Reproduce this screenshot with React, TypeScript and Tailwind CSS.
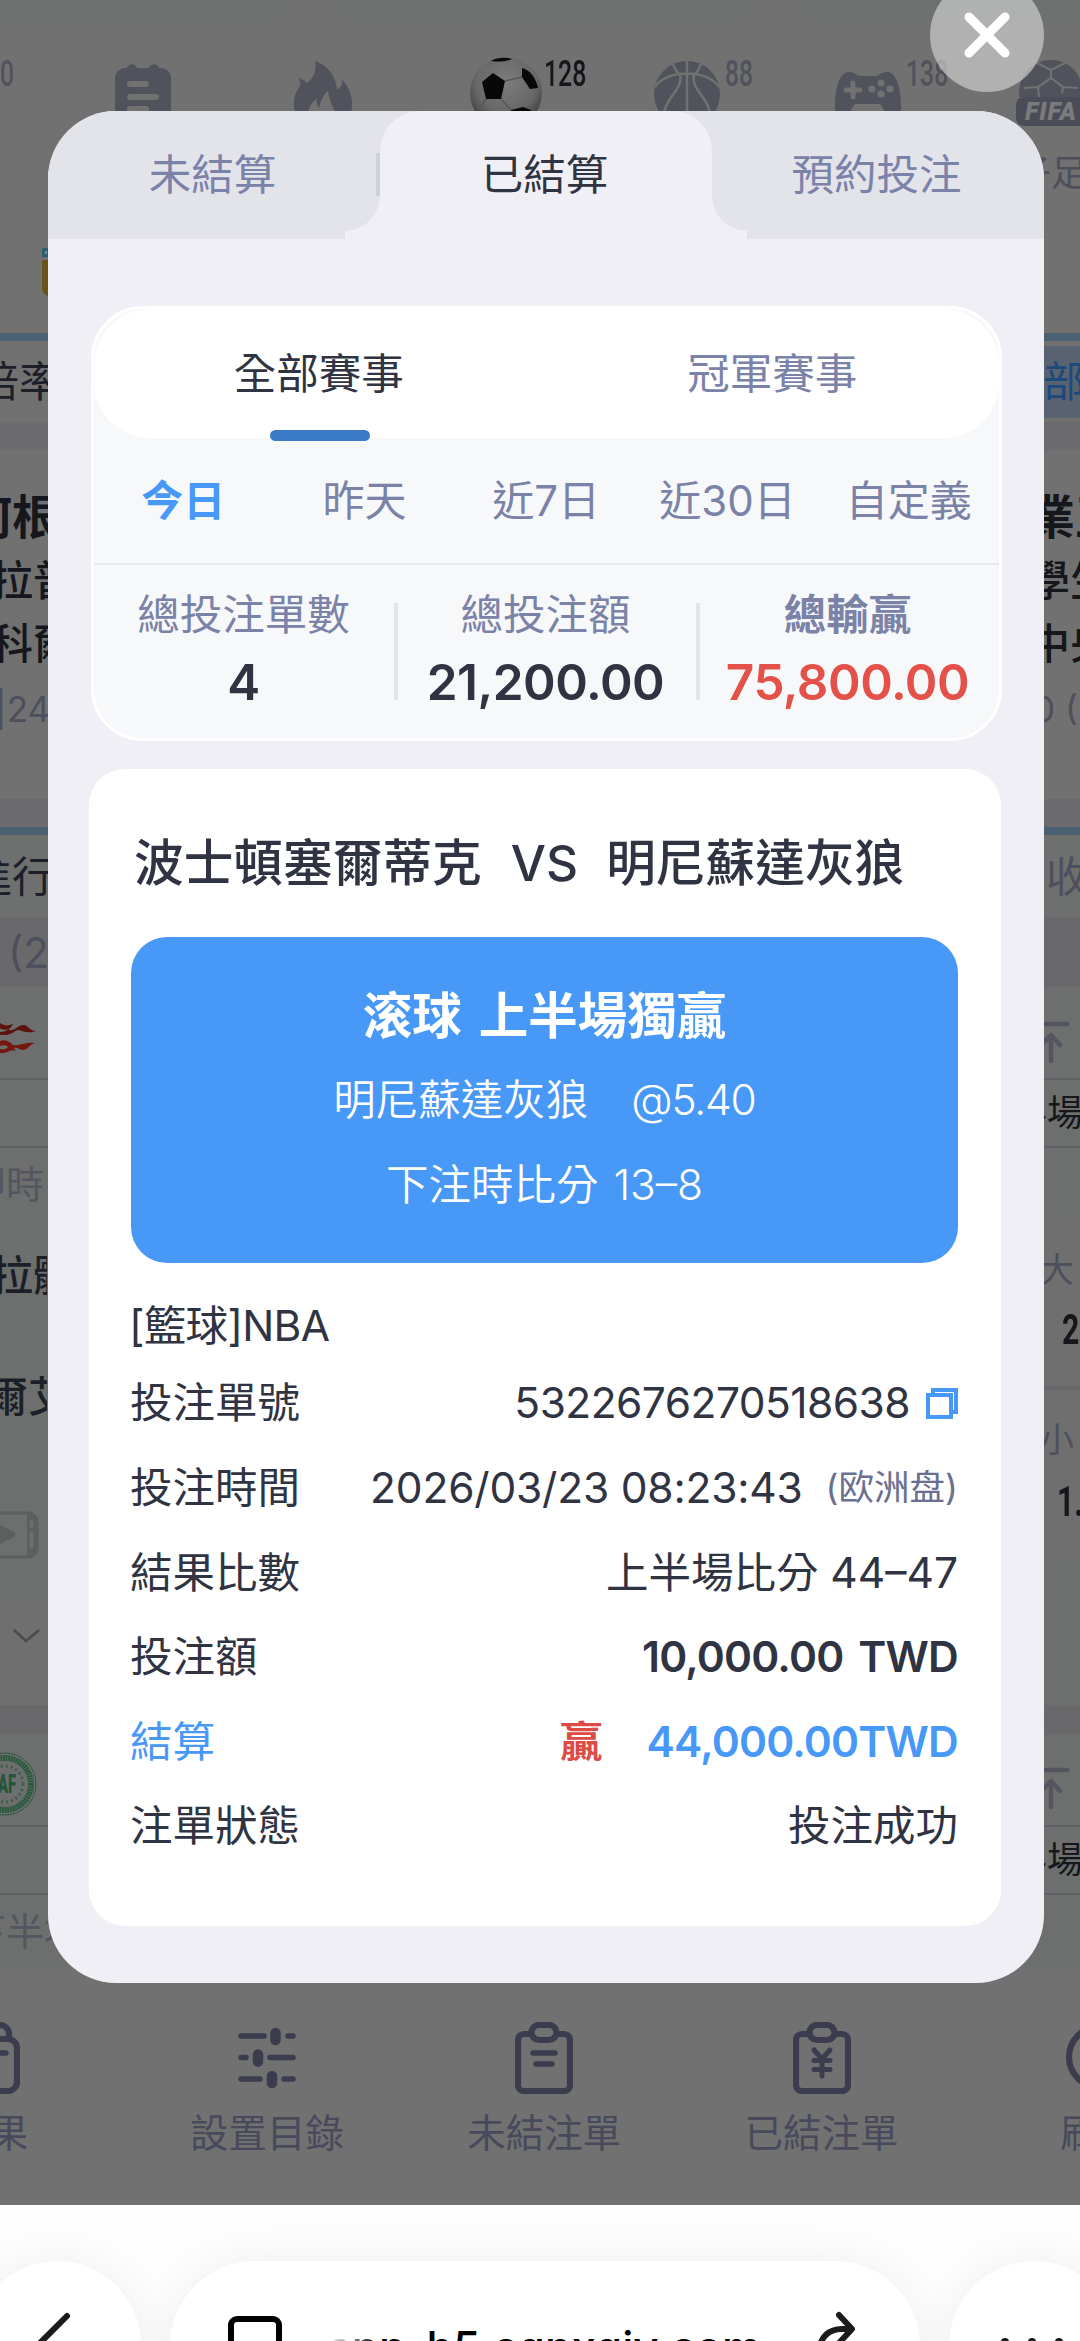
import React from 'react';
import clsx from 'clsx';

const PERIODS = ['今日', '昨天', '近7日', '近30日', '自定義'];

const STATS = [
  { label: '總投注單數', value: '4' },
  { label: '總投注額', value: '21,200.00' },
  { label: '總輸贏', value: '75,800.00', win: true },
];

interface StripProps {
  className: string;
  left?: React.ReactNode;
  right?: React.ReactNode;
}

// one full width line of the page behind the dialog
function Strip({ className, left, right }: StripProps) {
  return (
    <div className={clsx('flex justify-between overflow-hidden', className)}>
      <div className="flex w-[47px] items-center whitespace-nowrap">{left}</div>
      <div className="flex w-[37px] items-center whitespace-nowrap">{right}</div>
    </div>
  );
}

function NoteIcon() {
  return (
    <svg width="56" height="72" viewBox="0 0 56 72" fill="#50525c">
      <path d="M10 5h2c1-5 9-5 10 0h12c1-5 9-5 10 0h2a10 10 0 0 1 10 10v57H0V15A10 10 0 0 1 10 5z" />
      <path d="M15 21h16M15 34h26M15 46h16" stroke="#717171" strokeWidth="6" strokeLinecap="round" />
    </svg>
  );
}

function FlameIcon() {
  return (
    <svg width="60" height="72" viewBox="0 0 60 72" fill="#50525c">
      <path d="M21 0c12 4 21 14 22 29 5-3 6-7 4-12 7 8 11 16 11 26 0 16-10 28-29 28S0 58 0 42c0-8 3-13 6-17 0-3 0-5-1-8 3 1 6 3 8 5 7-5 10-13 8-22z" />
      <path d="M34 30c-5 4-7 9-9 17-2-3-3-6-2-10-6 5-9 11-10 19v15h35c0-16-10-19-14-41z" fill="#717171" />
      <path d="M23 36c-1 4 0 7 2 11 1-4 1-8 3-12z" fill="#50525c" />
    </svg>
  );
}

function SoccerIcon() {
  return (
    <svg width="72" height="72" viewBox="0 0 72 72">
      <defs>
        <radialGradient id="ball" cx="50%" cy="35%" r="60%">
          <stop offset="0" stopColor="#7c7c7c" />
          <stop offset="0.7" stopColor="#686868" />
          <stop offset="1" stopColor="#444" />
        </radialGradient>
      </defs>
      <circle cx="36" cy="36" r="36" fill="url(#ball)" />
      <path d="M23 16l12 8-4 18H16l-4-17zM52 11c8 2 14 10 16 20l-8 1-8-12zM21 4c6-4 16-4 21-2-7 3-14 3-21 2zM4 53l8 5-2 4zM41 53l12-3 8 3-2 14H42z" fill="#080808" />
      <path d="M35 24l17-4M31 42l10 11M16 42l-8 11" stroke="#585858" strokeWidth="1.5" fill="none" />
    </svg>
  );
}

function BasketballIcon() {
  return (
    <svg width="66" height="66" viewBox="0 0 66 66">
      <circle cx="33" cy="33" r="33" fill="#50525c" />
      <g stroke="#717171" strokeWidth="2.6" fill="none">
        <path d="M33 0v66M1 26C12 8 54 8 65 26M19 3c5 14 9 7 7 18S8 40 9 62M47 3c-5 14-9 7-7 18s18 19 17 41" />
      </g>
    </svg>
  );
}

function GamepadIcon() {
  return (
    <svg width="66" height="56" viewBox="0 0 66 56">
      <path d="M14 0c6 0 8 4 12 4h14c4 0 6-4 12-4 10 0 14 18 14 34 0 12-2 20-7 20-6 0-8-16-14-22H20c-6 6-8 22-13 22-5 0-7-8-7-20C0 18 4 0 14 0z" fill="#50525c" />
      <path d="M18 11v14M11 18h14" stroke="#717171" strokeWidth="5" strokeLinecap="round" />
      <g fill="#717171">
        <circle cx="46" cy="11" r="3.6" />
        <circle cx="46" cy="22" r="3.6" />
        <circle cx="55" cy="17" r="3.6" />
        <circle cx="37" cy="17" r="3.6" />
      </g>
    </svg>
  );
}

function FifaIcon() {
  return (
    <div className="flex w-[70px] flex-col items-center">
      <svg width="64" height="37" viewBox="0 0 64 37">
        <path d="M0 37C-1 14 14 0 32 0s33 14 32 37z" fill="#50525c" />
        <path d="M18 3l14 7 14-7M32 10v8l12 9-1 6M32 18l-13 9 1 10M19 27L5 28M44 27l15 1" stroke="#717171" strokeWidth="2.2" fill="none" />
      </svg>
      <div className="flex h-[29px] w-[70px] items-center justify-center rounded-lg bg-[#4a4c57] font-['Roboto'] text-[25px] font-black italic leading-none tracking-[1px] text-[#7b7b7b]">
        FIFA
      </div>
    </div>
  );
}

function CountBadge({ count, dark }: { count: string; dark?: boolean }) {
  return (
    <span
      className={clsx(
        "absolute top-[41px] left-[129px] origin-left scale-x-[0.69] font-['Roboto'] text-[36px] font-medium leading-[26px]",
        dark ? 'text-[#14161c]' : 'text-[#50525c]'
      )}
    >
      {count}
    </span>
  );
}

function SportItem({ children, count, dark }: { children?: React.ReactNode; count?: string; dark?: boolean }) {
  return (
    <div className="relative flex w-[181.3px] shrink-0 justify-center">
      {children}
      {count && <CountBadge count={count} dark={dark} />}
    </div>
  );
}

function ToTopIcon() {
  return (
    <svg width="27" height="44" viewBox="0 0 27 44" className="shrink-0" stroke="#545561" strokeWidth="4.5" strokeLinecap="round" fill="none">
      <path d="M-20 3h44M8 14v26M-2 24L8 14l9 10" strokeLinejoin="round" />
    </svg>
  );
}

function FireLogo() {
  return (
    <svg width="36" height="34" viewBox="0 0 36 34" className="shrink-0" fill="#5c130e">
      <path d="M0 2c4 3 8 3 13 1-1 3-5 5-4 6 7 1 8-5 15-5 4 0 5 6 12 6-8 3-13 0-17-1-5 0-6 6-19 5v-3c4 0 7-1 8-3-3 1-6 1-8-1z" />
      <path d="M0 20c6-2 10 1 13 4 7 1 12-3 22-2-5 1-6 6-12 7-4 0-5-3-9-2 1 1 1 2 2 3-6-3-8 3-16 2v-4c4 1 6 0 8-2-2-2-5-2-8-1z" fill="#74170f" />
    </svg>
  );
}

function VideoIcon() {
  return (
    <svg width="40" height="48" viewBox="0 0 40 48" className="shrink-0">
      <path d="M-10 2h38a9 9 0 0 1 9 9v26a9 9 0 0 1-9 9h-38" fill="none" stroke="#5d5f5f" strokeWidth="3" />
      <path d="M27 2h3a8 8 0 0 1 8 8v28a8 8 0 0 1-8 8h-3z" fill="#5d5f5f" />
      <rect x="29.500" y="9" width="4" height="8" rx="2" fill="#6c6f6e" />
      <rect x="29.500" y="20" width="4" height="18" rx="2" fill="#6c6f6e" />
      <path d="M-4 12l18 9a3 3 0 0 1 0 5l-18 9z" fill="#5d5f5f" />
    </svg>
  );
}

function ClubBadge() {
  return (
    <svg width="47" height="66" viewBox="0 0 47 66" className="shrink-0">
      <circle cx="5" cy="33" r="31" fill="none" stroke="#2c5a3f" strokeWidth="1" />
      <circle cx="5" cy="33" r="26" fill="none" stroke="#2a593d" strokeWidth="6" strokeDasharray="2 .6" />
      <circle cx="5" cy="33" r="18" fill="none" stroke="#3a5f4a" strokeWidth="3" strokeDasharray="2 3" />
      <text x="-2" y="42" fontFamily="Roboto" fontWeight="900" fontSize="25" textLength="18" lengthAdjust="spacingAndGlyphs" fill="#24543a">
        AF
      </text>
    </svg>
  );
}

function ClipboardIcon({ children }: { children?: React.ReactNode }) {
  return (
    <svg width="58" height="72" viewBox="0 0 58 72" fill="none" stroke="#3b3d4f" strokeWidth="6.200" strokeLinecap="round" strokeLinejoin="round">
      <path d="M14 12H9a6 6 0 0 0-6 6v45a6 6 0 0 0 6 6h40a6 6 0 0 0 6-6V18a6 6 0 0 0-6-6h-5" />
      <rect x="16.500" y="3" width="25" height="15" rx="7.500" />
      {children}
    </svg>
  );
}

function ResultIcon() {
  return (
    <svg width="60" height="72" viewBox="0 0 60 72" fill="none" stroke="#3b3d4f" strokeWidth="6.200" strokeLinecap="round" strokeLinejoin="round">
      <path d="M12 17v-4A10 10 0 0 1 22 3h18a9 9 0 0 1 9 9v5" />
      <rect x="3" y="17" width="54" height="52" rx="9" />
      <path d="M18 31h28M18 44h14" strokeWidth="5.500" />
    </svg>
  );
}

function SlidersIcon() {
  return (
    <svg width="58" height="72" viewBox="0 0 58 72" stroke="#3b3d4f" strokeLinecap="round">
      <path d="M3 14h23M50 14h5M3 35.500h5M32 35.500h23M3 57h19M46 57h9" strokeWidth="5.500" />
      <path d="M37.500 11v7M20 32.500v7M34 54v7" strokeWidth="10.500" />
    </svg>
  );
}

function NavItem({ label, children }: { label: string; children: React.ReactNode }) {
  return (
    <div className="flex w-[277.300px] shrink-0 flex-col items-center">
      {children}
      <span className="mt-[12px] text-[38.500px] leading-[54px] text-[#484a5b]">{label}</span>
    </div>
  );
}

function Backdrop() {
  return (
    <div className="flex h-[2205px] flex-col overflow-hidden bg-[#717171] text-[42px] text-[#4d4f5c]">
      <div className="flex h-[20px] gap-[44px]">
        <div className="-ml-10 w-[334px] shrink-0 rounded-br-[40px] bg-[#6d7170]" />
        <div className="w-[415px] shrink-0 rounded-b-[40px] bg-[#6d7170]" />
        <div className="w-[400px] shrink-0 rounded-bl-[40px] bg-[#6d7170]" />
      </div>
      <div className="-ml-[129px] flex h-[115px]">
        <SportItem count="0" />
        <SportItem>
          <div className="mt-[43px]"><NoteIcon /></div>
        </SportItem>
        <SportItem>
          <div className="mt-[41px]"><FlameIcon /></div>
        </SportItem>
        <SportItem count="128" dark>
          <div className="mt-[37px]"><SoccerIcon /></div>
        </SportItem>
        <SportItem count="88">
          <div className="mt-[41px]"><BasketballIcon /></div>
        </SportItem>
        <SportItem count="138">
          <div className="mt-[52px]"><GamepadIcon /></div>
        </SportItem>
        <SportItem>
          <div className="mt-[40px] ml-[3px]"><FifaIcon /></div>
        </SportItem>
      </div>
      <Strip className="h-[75px] text-[36px]" right={<span className="-ml-[28px]">子足球</span>} />
      <Strip
        className="h-[123px]"
        left={
          <div className="ml-[42px] flex w-5 flex-col gap-[3px]">
            <div className="h-[9px] border-[3px] border-[#2c6070] bg-[#7a8a90]" />
            <div className="h-[36px] rounded-bl-lg border-4 border-[#6a5315] bg-[#857136]" />
          </div>
        }
      />
      <div className="h-2 bg-[#4b6171]" />
      <Strip
        className="h-[81px]"
        left={<span className="-ml-[23px] text-[#1d1f28]">倍率</span>}
        right={<span className="flex h-[72px] w-full items-center bg-[#586270] text-[#1c4a7c]">部</span>}
      />
      <div className="h-7 bg-[#6b6b6e]" />
      <div className="h-[35px]" />
      <Strip
        className="h-[65px] text-[47px] font-bold text-[#15171d]"
        left={<span className="-ml-[35px]">何根</span>}
        right={<span className="-ml-[15px]">業王</span>}
      />
      <Strip
        className="h-[61px] font-medium text-[#15171d]"
        left={<span className="-ml-[9px]">拉普</span>}
        right={<span className="-ml-[15px]">學生</span>}
      />
      <Strip
        className="h-[65px] font-medium text-[#15171d]"
        left={<span className="-ml-[9px]">科爾</span>}
        right={<span className="-ml-[15px]">中央</span>}
      />
      <Strip
        className="h-[67px] text-[35px]"
        left={<span className="-ml-[5px]">|24</span>}
        right={<span className="-ml-[10px]">0 (</span>}
      />
      <div className="h-[56px]" />
      <div className="h-7 bg-[#6b6b6e]" />
      <div className="h-2 bg-[#4b6171]" />
      <Strip
        className="h-[82px] bg-[#6e706f]"
        left={<span className="-ml-[30px] text-[#1d1f28]">進行</span>}
        right={<span className="ml-[3px]">收</span>}
      />
      <Strip className="h-[70px] bg-[#69696c]" left={<span className="ml-[8px]">(24)</span>} />
      <div className="bg-[#6c6f6e]">
        <Strip className="h-[91px]" left={<div className="mt-[10px]"><FireLogo /></div>} right={<div className="mt-[20px]"><ToTopIcon /></div>} />
        <div className="h-[2px] bg-[#5f6066]" />
        <Strip className="h-[66px] text-[36px] text-[#15171d]" right={<span className="-ml-[32px]">半場</span>} />
        <div className="h-[2px] bg-[#5f6066]" />
        <Strip className="h-[73px] text-[38px] text-[#545561]" left={<span className="-ml-[32px]">即時</span>} />
      </div>
      <div className="flex h-[484px] justify-between bg-[#6c6f6e]">
        <div className="flex w-[47px] flex-col overflow-hidden whitespace-nowrap font-medium text-[#1d1f28]">
          <div className="flex h-[108px] items-center"><span className="-ml-[9px]">拉體</span></div>
          <div className="flex h-[134px] items-center"><span className="-ml-[14px]">爾艾</span></div>
          <div className="flex h-[144px] items-center"><VideoIcon /></div>
          <div className="flex h-[98px] items-start bg-[#6f6f6f]">
            <svg width="47" height="58" viewBox="0 0 47 58" fill="none" stroke="#4a4a4c" strokeWidth="2.500">
              <path d="M14 23l12 11 13-11" />
            </svg>
          </div>
        </div>
        <div className="flex w-[37px] flex-col overflow-hidden whitespace-nowrap bg-[#6f6f6f] text-[34px]">
          <div className="flex h-[96px] items-center"><span className="-ml-[3px]">大</span></div>
          <div className="flex h-[24px] items-center font-['Roboto'] text-[42px] font-bold text-[#15171d]"><span className="ml-[19px] origin-left scale-x-[0.72]">2.0</span></div>
          <div className="h-[45px]" />
          <div className="h-1 bg-[#67676a]" />
          <div className="flex h-[98px] items-center"><span className="-ml-[3px]">小</span></div>
          <div className="flex h-[26px] items-center font-['Roboto'] text-[42px] font-bold text-[#15171d]"><span className="ml-[14px] origin-left scale-x-[0.72]">1.9</span></div>
          <div className="h-[40px]" />
          <div className="flex-1 bg-[#6c6f6e]" />
        </div>
      </div>
      <div className="h-[30px] bg-[#69696c]" />
      <div className="bg-[#6c6f6e]">
        <Strip className="h-[90px]" left={<div className="mt-[8px]"><ClubBadge /></div>} right={<div className="mt-[18px]"><ToTopIcon /></div>} />
        <div className="h-[2px] bg-[#5f6066]" />
        <Strip className="h-[66px] text-[36px] text-[#15171d]" right={<span className="-ml-[32px]">半場</span>} />
        <div className="h-[2px] bg-[#5f6066]" />
        <Strip className="h-[73px] text-[38px] text-[#545561]" left={<span className="-ml-[32px]">下半場</span>} />
      </div>
      <div className="mt-[54px] -ml-[149px] flex">
        <NavItem label="賽果"><ResultIcon /></NavItem>
        <NavItem label="設置目錄"><SlidersIcon /></NavItem>
        <NavItem label="未結注單">
          <ClipboardIcon>
            <path d="M18 31h22M21 42h16" strokeWidth="5.500" />
          </ClipboardIcon>
        </NavItem>
        <NavItem label="已結注單">
          <ClipboardIcon>
            <path d="M21 28l8 9 8-9M21 38.500h16M21 47.500h16M29 37v17" strokeWidth="5" />
          </ClipboardIcon>
        </NavItem>
        <NavItem label="刷新">
          <svg width="68" height="72" viewBox="0 0 68 72" fill="none" stroke="#3b3d4f" strokeWidth="6.200">
            <circle cx="34" cy="35" r="30" />
          </svg>
        </NavItem>
      </div>
    </div>
  );
}

function BrowserBar() {
  return (
    <div className="flex h-[136px] items-start gap-[29px] overflow-hidden bg-[#fefefe] pt-[56px]">
      <div className="-ml-[27px] flex h-[170px] w-[168px] shrink-0 rounded-full bg-white shadow-[0_0_50px_rgba(0,0,0,0.07)]">
        <svg width="168" height="80" viewBox="0 0 168 80" fill="none" stroke="#1b1b1b" strokeWidth="6" strokeLinecap="round">
          <path d="M94 55L57 92" />
        </svg>
      </div>
      <div className="flex h-[170px] w-[750px] shrink-0 items-start justify-between rounded-full bg-white pt-[50px] pr-[63px] pl-[57px] shadow-[0_0_50px_rgba(0,0,0,0.07)]">
        <svg width="56" height="60" viewBox="0 0 56 60" fill="none" stroke="#000" strokeWidth="6">
          <rect x="4" y="8" width="48" height="48" rx="6" />
        </svg>
        <span className="mt-[8px] -ml-[12px] text-[44px] font-medium leading-[56px] text-black">
          <span className="bg-gradient-to-r from-transparent to-black bg-clip-text text-transparent">ap</span>p-h5.cqnxqiv.com
        </span>
        <svg width="40" height="60" viewBox="0 0 40 60" fill="none" stroke="#1b1b1b" strokeWidth="6" strokeLinecap="round" strokeLinejoin="round">
          <path d="M22 4l13 14-13 14M34 18h-9C12 18 3 26 2 40" />
        </svg>
      </div>
      <div className="flex h-[170px] w-[170px] shrink-0 justify-center gap-[19px] rounded-full bg-white pt-[77px] pr-[4px] shadow-[0_0_50px_rgba(0,0,0,0.07)]">
        <span className="size-[8px] rounded-full bg-[#1b1b1b]" />
        <span className="size-[8px] rounded-full bg-[#1b1b1b]" />
        <span className="size-[8px] rounded-full bg-[#1b1b1b]" />
      </div>
    </div>
  );
}

function Tabs() {
  return (
    <div className="flex h-[128px] bg-[#e3e4ea] text-[42.500px] leading-[127px] text-[#7b82a8]">
      <div className="relative flex w-[332px] justify-center">
        <span className="-ml-[2px]">未結算</span>
        <span className="absolute top-[42px] right-0 h-[43px] w-[4px] bg-[#cdd1df]" />
      </div>
      <div className="relative flex w-[332px] justify-center rounded-t-[40px] bg-[#f0eff5] text-[#303442]">
        <span className="absolute bottom-[8px] -left-[35px] size-[35px] bg-[radial-gradient(circle_at_0_0,#e3e4ea_34.500px,#f0eff5_35px)]" />
        <span className="absolute bottom-0 -left-[35px] h-[8px] w-[35px] bg-[#f0eff5]" />
        <span className="-ml-[2px]">已結算</span>
        <span className="absolute -right-[35px] bottom-[8px] size-[35px] bg-[radial-gradient(circle_at_100%_0,#e3e4ea_34.500px,#f0eff5_35px)]" />
        <span className="absolute -right-[35px] bottom-0 h-[8px] w-[35px] bg-[#f0eff5]" />
      </div>
      <div className="flex w-[332px] justify-center">
        <span className="-ml-[2px]">預約投注</span>
      </div>
    </div>
  );
}

function SummaryCard() {
  return (
    <div className="mr-[42px] ml-[43px] mt-[67px] h-[435px] rounded-[52px] border-[3.500px] border-white bg-[#f7f8f9] text-[42.500px] text-[#7b82a8]">
      <div className="flex h-[129px] rounded-[56px] bg-white">
        <div className="relative flex flex-1 items-center justify-center text-[#303442]">
          <span className="-ml-[2px]">全部賽事</span>
          <span className="absolute -bottom-[3px] h-[11px] w-[100px] rounded-full bg-[#3a7bc8]" />
        </div>
        <div className="flex flex-1 items-center justify-center">冠軍賽事</div>
      </div>
      <div className="-mx-[1px] flex h-[125px] items-center text-[42px]">
        {PERIODS.map((period, i) => (
          <div key={period} className={clsx('flex-1 text-center', i === 0 && 'font-bold text-[#4898f8]')}>
            {period}
          </div>
        ))}
      </div>
      <div className="h-[2px] bg-[#e9eaf0]" />
      <div className="-ml-[1px] flex">
        {STATS.map(({ label, value, win }, i) => (
          <div key={label} className="relative flex w-[302px] flex-col items-center">
            <span className={clsx('mt-[20px] leading-[60px]', win && 'font-bold')}>{label}</span>
            <span className={clsx('mt-[7px] text-[49.500px] leading-[60px] font-semibold tracking-[-0.5px]', win ? 'text-[#e35149]' : 'text-[#303442]')}>
              {value}
            </span>
            {i < 2 && <span className="absolute top-[38px] -right-[3px] h-[97px] w-[4px] bg-[#e4e5ec]" />}
          </div>
        ))}
      </div>
    </div>
  );
}

function Row({ label, children, accent }: { label: string; children: React.ReactNode; accent?: boolean }) {
  return (
    <div className={clsx('flex h-[84.600px] items-center justify-between', accent && 'text-[#4898f8]')}>
      <span className="-ml-[1px]">{label}</span>
      <div className="flex items-center">{children}</div>
    </div>
  );
}

function BetCard() {
  return (
    <div className="mt-[28px] mr-[43px] ml-[41px] h-[1157px] rounded-[36px] bg-white px-[42.500px] text-[42.500px] text-[#303442]">
      <div className="flex h-[168px] items-center gap-[29px] pt-[20px] pl-[3px] text-[49.700px] font-medium">
        <span>波士頓塞爾蒂克</span>
        <span className="font-[450]">VS</span>
        <span className="-ml-[1px]">明尼蘇達灰狼</span>
      </div>
      <div className="flex h-[326px] flex-col items-center rounded-[36px] bg-[#4898f8] font-[350] text-white">
        <div className="mt-[38px] flex h-[82px] items-center gap-[17px] text-[49.500px] font-bold">
          <span>滚球</span>
          <span>上半場獨贏</span>
        </div>
        <div className="flex h-[85px] items-center gap-[43px]">
          <span>明尼蘇達灰狼</span>
          <span className="tracking-[-1.2px]">@5.40</span>
        </div>
        <div className="flex h-[85px] items-center gap-[15px]">
          <span>下注時比分</span>
          <span>13–8</span>
        </div>
      </div>
      <div className="-ml-[2px] mt-[28px] flex h-[70px] items-center tracking-[-0.7px]">[籃球]NBA</div>
      <Row label="投注單號">
        <span className="tracking-[-0.55px]">5322676270518638</span>
        <svg width="32" height="32" viewBox="0 0 32 32" className="ml-[16px]" fill="none" stroke="#4898f8" strokeWidth="4">
          <rect x="2" y="8" width="23" height="22" />
          <path d="M7 7V3h23v22h-4" />
        </svg>
      </Row>
      <Row label="投注時間">
        <span className="tracking-[-0.2px]">2026/03/23 08:23:43</span>
        <span className="ml-[23px] text-[35.500px] text-[#6b7090]">(欧洲盘)</span>
      </Row>
      <Row label="結果比數">上半場比分 44–47</Row>
      <Row label="投注額">
        <span className="font-semibold tracking-[-0.8px] [word-spacing:5px]">10,000.00 TWD</span>
      </Row>
      <Row label="結算" accent>
        <span className="mr-[44px] font-bold text-[#dc4b45]">贏</span>
        <span className="font-semibold tracking-[-0.8px]">44,000.00TWD</span>
      </Row>
      <Row label="注單狀態">投注成功</Row>
    </div>
  );
}

export default function App() {
  return (
    <div className="relative h-[2341px] w-[1080px] overflow-hidden font-['Inter','Noto_Sans_CJK_TC',sans-serif]">
      <Backdrop />
      <BrowserBar />
      <button className="absolute -top-[22px] left-[930px] flex size-[114px] items-center justify-center rounded-full bg-[#d4d4d4]/65">
        <svg width="46" height="46" viewBox="0 0 46 46" stroke="#fff" strokeWidth="9" strokeLinecap="round">
          <path d="M5 5l36 36M41 5L5 41" />
        </svg>
      </button>
      <div className="absolute top-[111px] left-[47.500px] h-[1872px] w-[996px] overflow-hidden rounded-[68px] bg-[#f0eff5]">
        <Tabs />
        <SummaryCard />
        <BetCard />
      </div>
    </div>
  );
}
